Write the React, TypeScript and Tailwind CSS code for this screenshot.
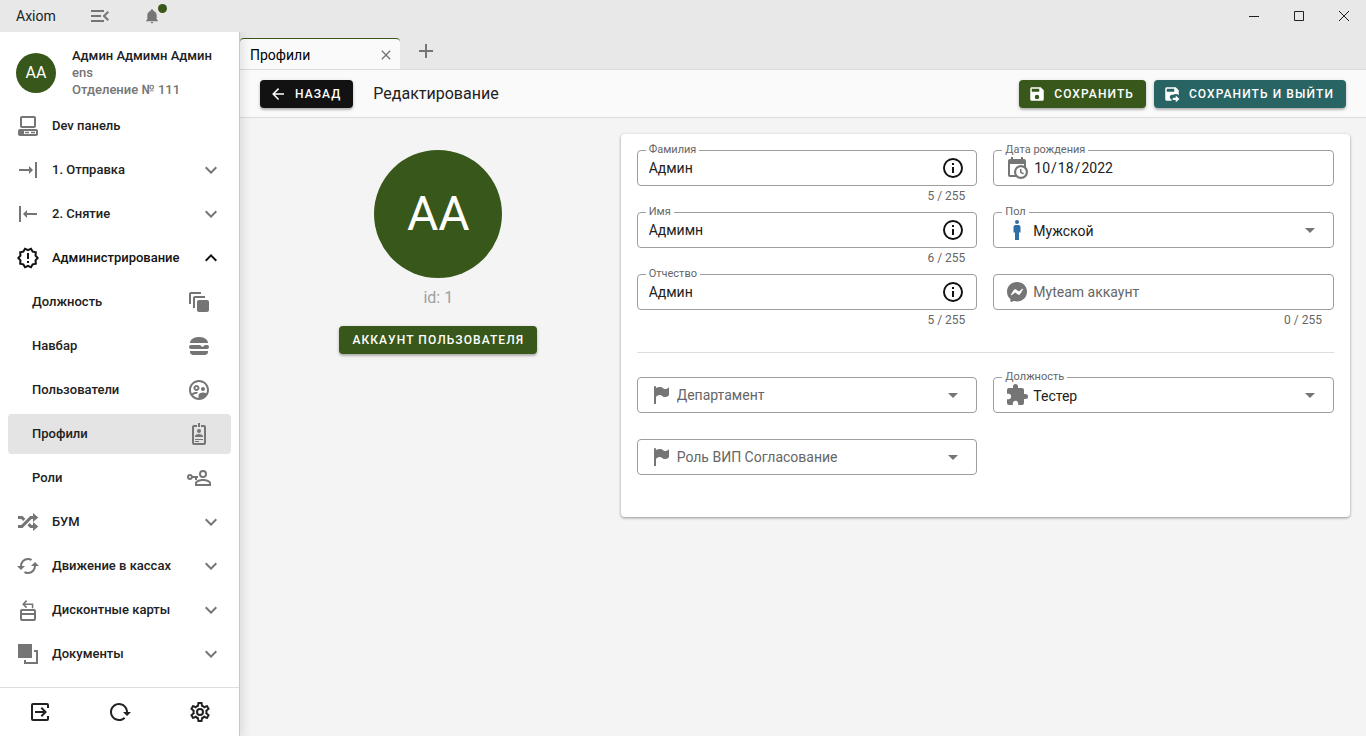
import { useId, useState } from "react";
import type { ReactNode } from "react";
import { MdOutlineSupervisedUserCircle } from "react-icons/md";

const paths = {
  menuOpen:
    "M21,15.61L19.59,17L14.58,12L19.59,7L21,8.39L17.44,12L21,15.61M3,6H16V8H3V6M3,13V11H13V13H3M3,18V16H16V18H3Z",
  bell: "M21,19V20H3V19L5,17V11C5,7.9 7.03,5.17 10,4.29C10,4.19 10,4.1 10,4A2,2 0 0,1 12,2A2,2 0 0,1 14,4C14,4.1 14,4.19 14,4.29C16.97,5.17 19,7.9 19,11V17L21,19M14,21A2,2 0 0,1 12,23A2,2 0 0,1 10,21",
  desktop:
    "M6,2C4.89,2 4,2.89 4,4V12C4,13.11 4.89,14 6,14H18C19.11,14 20,13.11 20,12V4C20,2.89 19.11,2 18,2H6M6,4H18V12H6V4M4,15C2.89,15 2,15.89 2,17V20C2,21.11 2.89,22 4,22H20C21.11,22 22,21.11 22,20V17C22,15.89 21.11,15 20,15H4M8,17H20V20H8V17M9,17.75V19.25H13V17.75H9M15,17.75V19.25H19V17.75H15Z",
  arrowToRight: "M21,4V20H19V4H21M17,12L13,16V13H3V11H13V8L17,12Z",
  arrowToLeft: "M3,4V20H5V4H3M7,12L11,16V13H21V11H11V8L7,12Z",
  alertDecagram:
    "M23,12L20.56,14.78L20.9,18.46L17.29,19.28L15.4,22.46L12,21L8.6,22.47L6.71,19.29L3.1,18.47L3.44,14.78L1,12L3.44,9.21L3.1,5.53L6.71,4.72L8.6,1.54L12,3L15.4,1.54L17.29,4.72L20.9,5.54L20.56,9.22L23,12M20.33,12L18.5,9.89L18.74,7.1L16,6.5L14.58,4.07L12,5.18L9.42,4.07L8,6.5L5.26,7.09L5.5,9.88L3.67,12L5.5,14.1L5.26,16.9L8,17.5L9.42,19.93L12,18.81L14.58,19.92L16,17.5L18.74,16.89L18.5,14.1L20.33,12M11,15H13V17H11V15M11,7H13V13H11V7",
  chevronDown: "M7.41,8.58L12,13.17L16.59,8.58L18,10L12,16L6,10L7.41,8.58Z",
  chevronUp: "M7.41,15.41L12,10.83L16.59,15.41L18,14L12,8L6,14L7.41,15.41Z",
  animation:
    "M4,2C2.89,2 2,2.89 2,4V14H4V4H14V2H4M8,6C6.89,6 6,6.89 6,8V18H8V8H18V6H8M12,10C10.89,10 10,10.89 10,12V20C10,21.11 10.89,22 12,22H20C21.11,22 22,21.11 22,20V12C22,10.89 21.11,10 20,10H12Z",
  hamburger:
    "M22 13C22 14.11 21.11 15 20 15H4C2.9 15 2 14.11 2 13S2.9 11 4 11H13L15.5 13L18 11H20C21.11 11 22 11.9 22 13M12 3C3 3 3 9 3 9H21C21 9 21 3 12 3M3 18C3 19.66 4.34 21 6 21H18C19.66 21 21 19.66 21 18V17H3V18Z",
  badge:
    "M17,3H14V5H17V21H7V5H10V3H7A2,2 0 0,0 5,5V21A2,2 0 0,0 7,23H17A2,2 0 0,0 19,21V5A2,2 0 0,0 17,3M12,7A2,2 0 0,1 14,9A2,2 0 0,1 12,11A2,2 0 0,1 10,9A2,2 0 0,1 12,7M16,15H8V14C8,12.67 10.67,12 12,12C13.33,12 16,12.67 16,14V15M16,18H8V17H16V18M12,20H8V19H12V20M13,5H11V1H13V5Z",
  accountKey:
    "M5.83,10C5.42,8.83 4.31,8 3,8A3,3 0 0,0 0,11A3,3 0 0,0 3,14C4.31,14 5.42,13.17 5.83,12H8V14H10V12H11V10H5.83M3,12A1,1 0 0,1 2,11A1,1 0 0,1 3,10A1,1 0 0,1 4,11A1,1 0 0,1 3,12M16,4A4,4 0 0,0 12,8A4,4 0 0,0 16,12A4,4 0 0,0 20,8A4,4 0 0,0 16,4M16,10.1A2.1,2.1 0 0,1 13.9,8A2.1,2.1 0 0,1 16,5.9C17.16,5.9 18.1,6.84 18.1,8C18.1,9.16 17.16,10.1 16,10.1M16,13C13.33,13 8,14.33 8,17V20H24V17C24,14.33 18.67,13 16,13M22.1,18.1H9.9V17C9.9,16.36 13,14.9 16,14.9C18.97,14.9 22.1,16.36 22.1,17V18.1Z",
  shuffle:
    "M17,3L22.25,7.5L17,12L22.25,16.5L17,21V18H14.26L11.44,15.18L13.56,13.06L15.5,15H17V12L17,9H15.5L6.5,18H2V15H5.26L14.26,6H17V3M2,6H6.5L9.32,8.82L7.2,10.94L5.26,9H2V6Z",
  cached:
    "M19,8L15,12H18A6,6 0 0,1 12,18C11,18 10.03,17.75 9.2,17.3L7.74,18.76C8.97,19.54 10.43,20 12,20A8,8 0 0,0 20,12H23M6,12A6,6 0 0,1 12,6C13,6 13.97,6.25 14.8,6.7L16.26,5.24C15.03,4.46 13.57,4 12,4A8,8 0 0,0 4,12H1L5,16L9,12",
  cardRefund:
    "M10,2L11.2,3.2L9,5.4H17.3V10.2H15.8V6.9H9L11.2,9.1L10,10.3L6.2,6.15L10,2M18,11H6A2,2 0 0,0 4,13V21A2,2 0 0,0 6,23H18A2,2 0 0,0 20,21V13A2,2 0 0,0 18,11M18,21H6V17H18V21M18,15H6V13H18V15Z",
  bringForward: "M2,2H16V16H2V2M22,8V22H8V18H10V20H20V10H18V8H22Z",
  exit: "M21,8V5A2,2 0 0,0 19,3H5A2,2 0 0,0 3,5V19A2,2 0 0,0 5,21H19A2,2 0 0,0 21,19V16H19V19H5V5H19V8H21M7,11H15.17L12.59,8.41L14,7L19,12L14,17L12.59,15.59L15.17,13H7V11Z",
  reload:
    "M2 12C2 16.97 6.03 21 11 21C13.39 21 15.68 20.06 17.4 18.4L15.9 16.9C14.63 18.25 12.86 19 11 19C4.76 19 1.64 11.46 6.05 7.05C10.46 2.64 18 5.77 18 12H15L19 16H19.1L23 12H20C20 7.03 15.97 3 11 3C6.03 3 2 7.03 2 12Z",
  cog: "M12,8A4,4 0 0,1 16,12A4,4 0 0,1 12,16A4,4 0 0,1 8,12A4,4 0 0,1 12,8M12,10A2,2 0 0,0 10,12A2,2 0 0,0 12,14A2,2 0 0,0 14,12A2,2 0 0,0 12,10M10,22C9.75,22 9.54,21.82 9.5,21.58L9.13,18.93C8.5,18.68 7.96,18.34 7.44,17.94L4.95,18.95C4.73,19.03 4.46,18.95 4.34,18.73L2.34,15.27C2.21,15.05 2.27,14.78 2.46,14.63L4.57,12.97L4.5,12L4.57,11L2.46,9.37C2.27,9.22 2.21,8.95 2.34,8.73L4.34,5.27C4.46,5.05 4.73,4.96 4.95,5.05L7.44,6.05C7.96,5.66 8.5,5.32 9.13,5.07L9.5,2.42C9.54,2.18 9.75,2 10,2H14C14.25,2 14.46,2.18 14.5,2.42L14.87,5.07C15.5,5.32 16.04,5.66 16.56,6.05L19.05,5.05C19.27,4.96 19.54,5.05 19.66,5.27L21.66,8.73C21.79,8.95 21.73,9.22 21.54,9.37L19.43,11L19.5,12L19.43,13L21.54,14.63C21.73,14.78 21.79,15.05 21.66,15.27L19.66,18.73C19.54,18.95 19.27,19.04 19.05,18.95L16.56,17.95C16.04,18.34 15.5,18.68 14.87,18.93L14.5,21.58C14.46,21.82 14.25,22 14,22H10M11.25,4L10.88,6.61C9.68,6.86 8.62,7.5 7.85,8.39L5.44,7.35L4.69,8.65L6.8,10.2C6.4,11.37 6.4,12.64 6.8,13.8L4.68,15.36L5.43,16.66L7.86,15.62C8.63,16.5 9.68,17.14 10.87,17.38L11.24,20H12.76L13.13,17.39C14.32,17.14 15.37,16.5 16.14,15.62L18.57,16.66L19.32,15.36L17.2,13.81C17.6,12.64 17.6,11.37 17.2,10.2L19.31,8.65L18.56,7.35L16.15,8.39C15.38,7.5 14.32,6.86 13.12,6.62L12.75,4H11.25Z",
  close:
    "M19,6.41L17.59,5L12,10.59L6.41,5L5,6.41L10.59,12L5,17.59L6.41,19L12,13.41L17.59,19L19,17.59L13.41,12L19,6.41Z",
  plus: "M19,13H13V19H11V13H5V11H11V5H13V11H19V13Z",
  arrowLeft: "M20,11V13H8L13.5,18.5L12.08,19.92L4.16,12L12.08,4.08L13.5,5.5L8,11H20Z",
  save: "M15,9H5V5H15M12,19A3,3 0 0,1 9,16A3,3 0 0,1 12,13A3,3 0 0,1 15,16A3,3 0 0,1 12,19M17,3H5C3.89,3 3,3.9 3,5V19A2,2 0 0,0 5,21H19A2,2 0 0,0 21,19V7L17,3Z",
  saveMove:
    "M17 3H5C3.9 3 3 3.9 3 5V19C3 20.1 3.9 21 5 21H11.81C11.42 20.34 11.17 19.6 11.07 18.84C9.5 18.31 8.66 16.6 9.2 15.03C9.61 13.83 10.73 13 12 13C12.44 13 12.88 13.1 13.28 13.29C15.57 11.5 18.83 11.59 21 13.54V7L17 3M15 9H5V5H15V9M13 17H17V14L22 18.5L17 23V20H13V17",
  info: "M11,9H13V7H11M12,20C7.59,20 4,16.41 4,12C4,7.59 7.59,4 12,4C16.41,4 20,7.59 20,12C20,16.41 16.41,20 12,20M12,2A10,10 0 0,0 2,12A10,10 0 0,0 12,22A10,10 0 0,0 22,12A10,10 0 0,0 12,2M11,17H13V11H11V17Z",
  calendarClock:
    "M15,13H16.5V15.82L18.94,17.23L18.19,18.53L15,16.69V13M19,8H5V19H9.67C9.24,18.09 9,17.07 9,16A7,7 0 0,1 16,9C17.07,9 18.09,9.24 19,9.67V8M5,21C3.89,21 3,20.1 3,19V5C3,3.89 3.89,3 5,3H6V1H8V3H16V1H18V3H19A2,2 0 0,1 21,5V11.1C22.24,12.36 23,14.09 23,16A7,7 0 0,1 16,23C14.09,23 12.36,22.24 11.1,21H5M16,11.15A4.85,4.85 0 0,0 11.15,16C11.15,18.68 13.32,20.85 16,20.85A4.85,4.85 0 0,0 20.85,16C20.85,13.32 18.68,11.15 16,11.15Z",
  male: "M12,2A2,2 0 0,1 14,4A2,2 0 0,1 12,6A2,2 0 0,1 10,4A2,2 0 0,1 12,2M10.5,7H13.5A2,2 0 0,1 15.5,9V14.5H14V22H10V14.5H8.5V9A2,2 0 0,1 10.5,7Z",
  messenger:
    "M12,2C6.36,2 2,6.13 2,11.7C2,14.61 3.19,17.14 5.14,18.87C5.3,19 5.4,19.22 5.41,19.44L5.46,21.22C5.5,21.79 6.07,22.16 6.59,21.93L8.57,21.06C8.74,21 8.93,20.97 9.1,21C10,21.27 11,21.4 12,21.4C17.64,21.4 22,17.27 22,11.7C22,6.13 17.64,2 12,2M18,9.46L15.07,14.13C14.6,14.86 13.6,15.05 12.9,14.5L10.56,12.77C10.35,12.61 10.05,12.61 9.84,12.77L6.68,15.17C6.26,15.5 5.71,15 6,14.54L8.93,9.87C9.4,9.14 10.4,8.95 11.1,9.47L13.44,11.23C13.66,11.39 13.95,11.39 14.16,11.23L17.32,8.83C17.74,8.5 18.29,9 18,9.46Z",
  flag: "M6,3A1,1 0 0,1 7,4V4.88C8.06,4.44 9.5,4 11,4C14,4 14,6 16,6C19,6 20,4 20,4V12C20,12 19,14 16,14C13,14 13,12 11,12C8,12 7,14 7,14V21H5V4A1,1 0 0,1 6,3Z",
  puzzle:
    "M20.5,11H19V7C19,5.89 18.1,5 17,5H13V3.5A2.5,2.5 0 0,0 10.5,1A2.5,2.5 0 0,0 8,3.5V5H4A2,2 0 0,0 2,7V10.8H3.5C5,10.8 6.2,12 6.2,13.5C6.2,15 5,16.2 3.5,16.2H2V20A2,2 0 0,0 4,22H7.8V20.5C7.8,19 9,17.8 10.5,17.8C12,17.8 13.2,19 13.2,20.5V22H17A2,2 0 0,0 19,20V16H20.5A2.5,2.5 0 0,0 23,13.5A2.5,2.5 0 0,0 20.5,11Z",
  menuDown: "M7,10L12,15L17,10H7Z",
};

type IconName = keyof typeof paths;

function Icon({ name, className = "size-6" }: { name: IconName; className?: string }) {
  return (
    <svg viewBox="0 0 24 24" aria-hidden="true" className={`shrink-0 fill-current ${className}`}>
      <path d={paths[name]} />
    </svg>
  );
}

function WindowBar() {
  return (
    <header className="flex h-8 shrink-0 items-center bg-[#e8e8e8] pl-4">
      <span className="w-16 text-sm">Axiom</span>
      <button type="button" aria-label="Свернуть меню" className="ml-2 text-[#757575]">
        <Icon name="menuOpen" />
      </button>
      <button type="button" aria-label="Уведомления" className="relative ml-8 text-[#757575]">
        <Icon name="bell" className="size-4" />
        <span className="absolute -top-1 left-3.5 size-[9px] rounded-full bg-[#38571a]" />
      </button>
      <div className="ml-auto flex items-center">
        <button type="button" aria-label="Свернуть окно" className="flex h-8 w-[45px] items-center justify-center">
          <svg viewBox="0 0 10 10" className="size-2.5">
            <path d="M0 5.5H10" stroke="currentColor" />
          </svg>
        </button>
        <button type="button" aria-label="Развернуть окно" className="flex h-8 w-[45px] items-center justify-center">
          <svg viewBox="0 0 10 10" className="size-2.5">
            <path d="M.5 .5H9.5V9.5H.5Z" fill="none" stroke="currentColor" />
          </svg>
        </button>
        <button type="button" aria-label="Закрыть окно" className="flex h-8 w-[45px] items-center justify-center">
          <svg viewBox="0 0 10 10" className="size-2.5">
            <path d="M0 0L10 10M10 0L0 10" fill="none" stroke="currentColor" />
          </svg>
        </button>
      </div>
    </header>
  );
}

function NavRow({ icon, text, chevron, active }: { icon: IconName; text: string; chevron?: IconName; active?: boolean }) {
  return (
    <li>
      <a href="#" className={`flex h-10 items-center gap-3 rounded px-2 ${active ? "text-[#121212]" : ""}`}>
        <span className={active ? "text-[#121212]" : "text-[#757575]"}>
          <Icon name={icon} />
        </span>
        <span className="grow">{text}</span>
        {chevron && (
          <span className={active ? "text-[#121212]" : "text-[#757575]"}>
            <Icon name={chevron} />
          </span>
        )}
      </a>
    </li>
  );
}

function SubRow({ icon, text, selected }: { icon: ReactNode; text: string; selected?: boolean }) {
  return (
    <li>
      <a href="#" className={`flex h-10 items-center justify-between rounded pr-5 pl-6 ${selected ? "bg-[#e4e4e4]" : ""}`}>
        <span>{text}</span>
        <span className="text-[#757575]">{icon}</span>
      </a>
    </li>
  );
}

function Sidebar() {
  return (
    <aside className="z-10 flex w-60 shrink-0 flex-col border-r border-[#c8c8c8] bg-white shadow-[2px_2px_10px_rgba(0,0,0,0.12)] [clip-path:inset(0_-16px_0_0)]">
      <div className="flex h-[74px] shrink-0 items-center gap-4 pt-2 pl-4">
        <span className="flex size-10 shrink-0 items-center justify-center rounded-full bg-[#38571a] text-base text-white">
          AA
        </span>
        <div className="pb-0.5 text-[13px] leading-[17px] font-medium whitespace-nowrap text-[#757575]">
          <p className="text-[#212121]">Админ Адмимн Админ</p>
          <p>ens</p>
          <p>Отделение № 111</p>
        </div>
      </div>
      <nav className="min-h-0 grow overflow-y-auto px-2 text-[13px] font-medium">
        <ul className="flex flex-col gap-1">
          <NavRow icon="desktop" text="Dev панель" />
          <NavRow icon="arrowToRight" text="1. Отправка" chevron="chevronDown" />
          <NavRow icon="arrowToLeft" text="2. Снятие" chevron="chevronDown" />
          <NavRow icon="alertDecagram" text="Администрирование" chevron="chevronUp" active />
          <SubRow icon={<Icon name="animation" />} text="Должность" />
          <SubRow icon={<Icon name="hamburger" />} text="Навбар" />
          <SubRow icon={<MdOutlineSupervisedUserCircle className="size-6" />} text="Пользователи" />
          <SubRow icon={<Icon name="badge" />} text="Профили" selected />
          <SubRow icon={<Icon name="accountKey" />} text="Роли" />
          <NavRow icon="shuffle" text="БУМ" chevron="chevronDown" />
          <NavRow icon="cached" text="Движение в кассах" chevron="chevronDown" />
          <NavRow icon="cardRefund" text="Дисконтные карты" chevron="chevronDown" />
          <NavRow icon="bringForward" text="Документы" chevron="chevronDown" />
        </ul>
      </nav>
      <div className="flex h-[49px] shrink-0 items-center justify-between border-t border-[#dedede] pr-[27px] pl-7">
        <button type="button" aria-label="Выйти">
          <Icon name="exit" />
        </button>
        <button type="button" aria-label="Обновить">
          <Icon name="reload" />
        </button>
        <button type="button" aria-label="Настройки">
          <Icon name="cog" />
        </button>
      </div>
    </aside>
  );
}

const buttonBase =
  "flex h-7 items-center rounded text-xs font-medium tracking-[0.09em] text-white shadow-[0_2px_2px_rgba(0,0,0,0.2),0_1px_4px_rgba(0,0,0,0.14)]";

function Counter({ children }: { children: ReactNode }) {
  return <p className="px-3 pt-0.5 text-right text-xs leading-4 text-[#666666]">{children}</p>;
}

function Floating({ id, children }: { id: string; children: ReactNode }) {
  return (
    <label htmlFor={id} className="absolute -top-[7px] left-2 bg-white px-[3px] text-[11px] leading-3 text-[#666666]">
      {children}
    </label>
  );
}

const box = "relative flex h-9 items-center rounded border border-[#9e9e9e] px-[11px]";

function NameField({ label, initial }: { label: string; initial: string }) {
  const id = useId();
  const [value, setValue] = useState(initial);
  return (
    <div className="h-[62px]">
      <div className={box}>
        <Floating id={id}>{label}</Floating>
        <input
          id={id}
          value={value}
          maxLength={255}
          onChange={(e) => setValue(e.target.value)}
          className="min-w-0 grow bg-transparent outline-none"
        />
        <Icon name="info" className="size-6 text-[#121212]" />
      </div>
      <Counter>{value.length} / 255</Counter>
    </div>
  );
}

function SelectField({ label, icon, iconClass, value }: { label: string; icon: IconName; iconClass: string; value?: string }) {
  const id = useId();
  return (
    <div className="h-[62px]">
      <div className={box}>
        {value && <Floating id={id}>{label}</Floating>}
        <span className={iconClass}>
          <Icon name={icon} />
        </span>
        <select
          id={id}
          aria-label={value ? undefined : label}
          defaultValue={value ?? ""}
          className={`min-w-0 grow appearance-none bg-transparent pl-1 outline-none ${value ? "pt-0.5" : "text-[#666666]"}`}
        >
          <option value={value ?? ""}>{value ?? label}</option>
        </select>
        <Icon name="menuDown" className="pointer-events-none size-6 text-[#757575]" />
      </div>
    </div>
  );
}

function ProfileForm() {
  return (
    <form className="col-span-2 rounded bg-white px-4 pt-4 shadow-[0_1px_3px_rgba(0,0,0,0.4)]">
      <div className="grid grid-cols-2 gap-x-4">
        <NameField label="Фамилия" initial="Админ" />
        <div className="h-[62px]">
          <div className={box}>
            <Floating id="birth">Дата рождения</Floating>
            <Icon name="calendarClock" className="size-6 text-[#757575]" />
            <input
              id="birth"
              type="date"
              defaultValue="2022-10-18"
              className="min-w-0 grow bg-transparent pl-1 outline-none [&::-webkit-calendar-picker-indicator]:hidden"
            />
          </div>
        </div>
        <NameField label="Имя" initial="Адмимн" />
        <SelectField label="Пол" icon="male" iconClass="text-[#2f6fa8]" value="Мужской" />
        <NameField label="Отчество" initial="Админ" />
        <div>
          <div className={box}>
            <Icon name="messenger" className="size-6 text-[#757575]" />
            <input
              aria-label="Myteam аккаунт"
              placeholder="Myteam аккаунт"
              className="min-w-0 grow bg-transparent pl-1 outline-none placeholder:text-[#666666]"
            />
          </div>
          <Counter>0 / 255</Counter>
        </div>
      </div>
      <hr className="mt-4 mb-6 border-[#dedede]" />
      <div className="grid grid-cols-2 gap-x-4 pb-4">
        <SelectField label="Департамент" icon="flag" iconClass="text-[#757575]" />
        <SelectField label="Должность" icon="puzzle" iconClass="text-[#757575]" value="Тестер" />
        <SelectField label="Роль ВИП Согласование" icon="flag" iconClass="text-[#757575]" />
      </div>
    </form>
  );
}

export default function App() {
  return (
    <div className="flex h-screen flex-col font-['Roboto',sans-serif] text-sm text-[#212121]">
      <WindowBar />
      <div className="flex min-h-0 grow">
        <Sidebar />
        <main className="flex min-w-0 grow flex-col bg-[#f4f4f4]">
          <div className="flex h-[38px] shrink-0 items-end border-b border-[#dcdcdc] bg-[#e8e8e8]">
            <div className="flex h-[31px] w-40 items-center justify-between rounded-t border-t border-[#38571a] bg-[#fafafa] pt-0.5 pr-1.5 pl-2.5">
              <span className="text-black">Профили</span>
              <button type="button" aria-label="Закрыть вкладку" className="text-[#757575]">
                <Icon name="close" className="size-4" />
              </button>
            </div>
            <button type="button" aria-label="Новая вкладка" className="mb-1.5 ml-3.5 text-[#757575]">
              <Icon name="plus" />
            </button>
          </div>
          <div className="flex h-12 shrink-0 items-center border-b border-[#dcdcdc] bg-[#fafafa] px-5">
            <button type="button" className={`${buttonBase} gap-2 bg-[#121212] pr-3 pl-[9px]`}>
              <Icon name="arrowLeft" className="size-[18px]" />
              НАЗАД
            </button>
            <h1 className="ml-5 text-base">Редактирование</h1>
            <div className="ml-auto flex gap-2">
              <button type="button" className={`${buttonBase} gap-2 bg-[#38571a] pr-3 pl-[9px]`}>
                <Icon name="save" className="size-[18px]" />
                СОХРАНИТЬ
              </button>
              <button type="button" className={`${buttonBase} gap-2 bg-[#286464] pr-3 pl-[9px]`}>
                <Icon name="saveMove" className="size-[18px]" />
                СОХРАНИТЬ И ВЫЙТИ
              </button>
            </div>
          </div>
          <div className="grid min-h-0 grow grid-cols-3 items-start overflow-y-auto p-4">
            <section className="flex flex-col items-center pt-4">
              <div className="flex size-32 items-center justify-center rounded-full bg-[#38571a] text-5xl text-white">
                AA
              </div>
              <p className="mt-2 text-base text-[#9e9e9e]">id: 1</p>
              <button type="button" className={`${buttonBase} mt-4 bg-[#38571a] px-[13px]`}>
                АККАУНТ ПОЛЬЗОВАТЕЛЯ
              </button>
            </section>
            <ProfileForm />
          </div>
        </main>
      </div>
    </div>
  );
}
